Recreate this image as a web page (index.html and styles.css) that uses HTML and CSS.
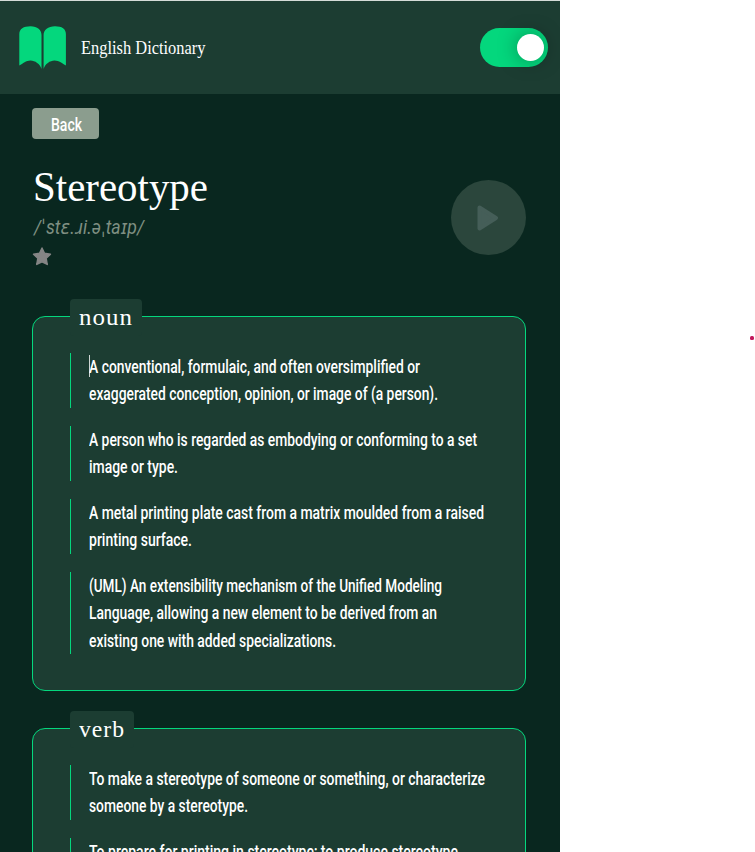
FILE: index.html
```
<!DOCTYPE html>
<html lang="en">
<head>
<meta charset="utf-8">
<title>English Dictionary</title>
<link rel="stylesheet" href="styles.css">
</head>
<body>
<div class="app">
  <header class="header">
    <svg class="logo" width="48" height="44" viewBox="0 0 48 44"><path d="M.3 8C.3 3 4.500 .3 11.500 .3S22.500 4 22.500 9V43C21 38 16 34.500 11.500 34.500C7 34.500 4 37.500 .3 39.500ZM24.600 9C24.600 4 29 .3 36 .3S46.900 3 46.900 8V39.500C43.500 37.500 40 34.500 35.500 34.500C31 34.500 26 38 24.600 43Z"/></svg>
    <span class="brand"><span class="line" data-width="124.5">English Dictionary</span></span>
    <span class="switch"><span class="knob"></span></span>
  </header>
  <main class="content">
    <button class="back"><span class="line" data-width="31">Back</span></button>
    <section class="word">
      <div>
        <h1><span class="line" data-width="175">Stereotype</span></h1>
        <p class="phonetic"><span class="line" data-width="110">/ˈstɛ.ɹi.əˌtaɪp/</span></p>
        <svg class="star" width="20" height="19" viewBox="0 0 20 19"><path d="M10 1 12.500 6.300 18.500 7.200 14.200 11.300 15.300 17.500 10 14.800 4.700 17.500 5.800 11.300 1.500 7.200 7.500 6.300Z"/></svg>
      </div>
      <div class="play"><svg width="22" height="26" viewBox="0 0 22 26"><path d="M2.500 2.500 19 13 2.500 23.500Z"/></svg></div>
    </section>
    <section class="card">
      <h2><span class="line" data-width="54">noun</span></h2>
      <ul>
        <li class="first"><span class="line" data-width="331">A conventional, formulaic, and often oversimplified or</span><span class="line" data-width="349">exaggerated conception, opinion, or image of (a person).</span></li>
        <li><span class="line" data-width="388">A person who is regarded as embodying or conforming to a set</span><span class="line" data-width="89">image or type.</span></li>
        <li><span class="line" data-width="395">A metal printing plate cast from a matrix moulded from a raised</span><span class="line" data-width="103">printing surface.</span></li>
        <li><span class="line" data-width="353">(UML) An extensibility mechanism of the Unified Modeling</span><span class="line" data-width="348">Language, allowing a new element to be derived from an</span><span class="line" data-width="247">existing one with added specializations.</span></li>
      </ul>
    </section>
    <section class="card">
      <h2><span class="line" data-width="46">verb</span></h2>
      <ul>
        <li><span class="line" data-width="396">To make a stereotype of someone or something, or characterize</span><span class="line" data-width="159">someone by a stereotype.</span></li>
        <li><span class="line" data-width="369">To prepare for printing in stereotype; to produce stereotype</span></li>
      </ul>
    </section>
  </main>
</div>
<span class="dot"></span>
<script src="fit.js"></script>
</body>
</html>
```
FILE: styles.css
```
* { box-sizing: border-box; }
html, body { margin: 0; height: 852px; overflow: hidden; background: #fff; }
.app {
  width: 560px;
  height: 852px;
  overflow: hidden;
  border-top: 1px solid #d5dcd8;
  background: #09271f;
  color: #fff;
  font: 500 17.6px/27.33px Roboto, "Liberation Sans", sans-serif;
}
.line { display: block; width: max-content; white-space: nowrap; transform-origin: 0 50%; }
.header {
  display: flex;
  align-items: center;
  height: 93px;
  padding: 0 12px 0 19px;
  background: #1c3d32;
}
.logo { fill: #04d77d; }
.brand { flex: 1; margin-left: 14px; font: 18px/28px "Liberation Serif", serif; }
.switch {
  display: flex;
  align-items: center;
  justify-content: flex-end;
  width: 68px;
  height: 39px;
  padding-right: 4px;
  border-radius: 20px;
  background: #04d77d;
}
.knob { width: 27px; height: 27px; border-radius: 50%; background: #fff; box-shadow: 0 0 20px rgba(0, 0, 0, .35); }
.content { padding: 14px 34px 0 32px; }
.back {
  display: block;
  width: 67px;
  height: 31px;
  padding: 3px 0 0 19px;
  border: 0;
  border-radius: 4px;
  background: #8b9d8e;
  color: #fff;
  font: 500 17.6px/28px Roboto, sans-serif;
}
.word { display: flex; justify-content: space-between; height: 177px; padding-top: 24px; }
h1 { margin: 0 0 0 1px; font: 42px/48px "Liberation Serif", serif; }
.phonetic { margin: 3px 0 0 2px; color: #7f8f82; font: italic 20px/27px Roboto, "DejaVu Sans", sans-serif; }
.star { display: block; margin-top: 6px; fill: #858585; stroke: #858585; stroke-width: 1.4; stroke-linejoin: round; }
.play {
  display: flex;
  align-items: center;
  justify-content: center;
  width: 75px;
  height: 75px;
  margin-top: 17px;
  padding-right: 2px;
  border-radius: 50%;
  background: #2b463c;
}
.play svg { fill: #455e58; stroke: #455e58; stroke-width: 4; stroke-linejoin: round; }
.card {
  height: 375px;
  margin-bottom: 37px;
  padding: 0 37px;
  border: 1px solid #04d77d;
  border-radius: 13px;
  background: #1c3d32;
}
h2 {
  width: max-content;
  height: 37px;
  margin: -18px 0 0;
  padding: 0 9px;
  border-radius: 4px;
  background: #1c3d32;
  font: 24px/37px "Liberation Serif", serif;
  letter-spacing: 1px;
}
ul { display: flex; flex-direction: column; gap: 18.4px; margin: 17px 0 0; padding: 0; list-style: none; }
li { padding-left: 18px; border-left: 1px solid #04d77d; }
li .line { position: relative; top: 1px; }
.first .line:first-child::before {
  content: "";
  position: absolute;
  left: 0;
  top: 1px;
  width: 1px;
  height: 22px;
  background: #fff;
}
.dot { position: absolute; left: 750px; top: 336px; width: 4px; height: 4px; border-radius: 1.500px; background: #c2185b; }
```
FILE: fit.js
```
// Condense each line to its set measure.
document.querySelectorAll('.line').forEach(function (line) {
  var target = parseFloat(line.dataset.width);
  var natural = line.getBoundingClientRect().width;
  line.style.transform = 'scaleX(' + target / natural + ')';
  line.style.marginRight = (target - natural) + 'px';
});
```
